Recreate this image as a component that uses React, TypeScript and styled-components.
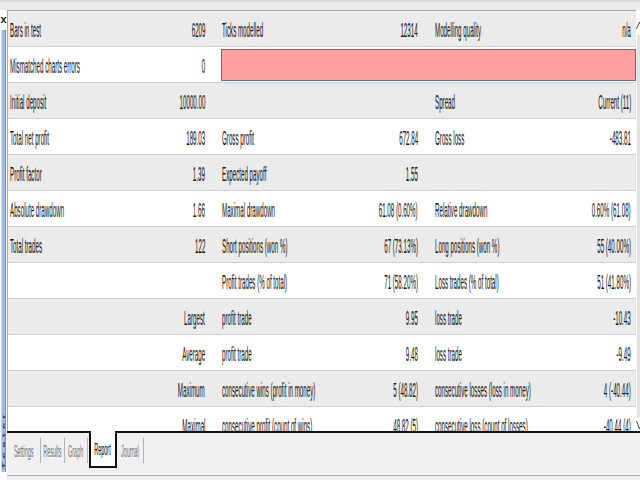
import React from 'react';
import styled, { createGlobalStyle } from 'styled-components';

const GlobalStyle = createGlobalStyle`
  html, body { margin: 0; padding: 0; width: 640px; height: 480px; overflow: hidden; background: #f0f0f0; }
  body { font-family: "Liberation Sans", Arial, sans-serif; color: #111; }
  * { box-sizing: border-box; }
`;

const Window = styled.div`
  width: 640px;
  height: 480px;
  display: flex;
  flex-direction: column;
  background: #f0f0f0;
  overflow: hidden;
`;

const TopBar = styled.div`
  height: 10px;
  flex: none;
  background: #ebebeb;
  border-top: 2px solid #dadada;
`;

const Body = styled.div`
  display: grid;
  grid-template-columns: 7px 633px;
  height: 470px;
  flex: none;
`;

const SideStrip = styled.div`
  display: grid;
  grid-template-rows: 18px 1fr;
  padding-bottom: 8px;
  background: #ffffff;
  height: 470px;
`;

const Close = styled.div`
  display: flex;
  align-items: center;
  justify-content: center;
  font-size: 11px;
  font-weight: bold;
  color: #222;
`;

const BlueBar = styled.div`
  margin: 2px 1px 0 1px;
  background-color: #9dbbe2;
  border-left: 1px solid #c8d9ef;
  border-right: 1px solid #6b92c6;
  display: flex;
  flex-direction: column;
  justify-content: flex-end;
  align-items: center;
  padding-bottom: 3px;
  overflow: hidden;
`;

const VerticalLabel = styled.span`
  writing-mode: vertical-rl;
  transform: scaleX(0.35) rotate(180deg);
  font-size: 12px;
  font-weight: bold;
  letter-spacing: 4px;
  color: #1c2c5c;
  white-space: nowrap;
`;

const Content = styled.div`
  min-width: 0;
  display: flex;
  flex-direction: column;
`;

const ReportArea = styled.div`
  height: 421px;
  flex: none;
  display: flex;
`;

const Table = styled.div`
  flex: 1;
  min-width: 0;
  overflow: hidden;
  background: #ffffff;
  border-top: 1px solid #a9a9a9;
  border-left: 1px solid #a9a9a9;
`;

const Row = styled.div<{ $alt: boolean }>`
  display: grid;
  grid-template-columns: 106px 106px 106px 106px 102px 102px;
  height: 36px;
  background: ${p => (p.$alt ? '#ebebeb' : '#ffffff')};
  border-bottom: 1px solid #cfcfcf;
`;

const Cell = styled.div<{ $right?: boolean; $pl?: number; $pr?: number }>`
  display: flex;
  align-items: center;
  justify-content: ${p => (p.$right ? 'flex-end' : 'flex-start')};
  padding-left: ${p => p.$pl ?? 0}px;
  padding-right: ${p => p.$pr ?? 0}px;
  padding-top: 2px;
  white-space: nowrap;
  overflow: visible;
`;

const Txt = styled.span<{ $right?: boolean }>`
  display: inline-block;
  flex: none;
  font-size: 20px;
  line-height: 22px;
  transform: scaleX(0.31);
  transform-origin: ${p => (p.$right ? 'right' : 'left')} center;
`;

const PinkBar = styled.div`
  grid-column: 3 / 7;
  margin: 2px 0 1px 1px;
  background: #ffa0a0;
  border: 1px solid #557196;
`;

const Scrollbar = styled.div`
  width: 4px;
  flex: none;
  display: flex;
  flex-direction: column;
  background: #ffffff;
`;

const ArrowBox = styled.div<{ $h: number }>`
  height: ${p => p.$h}px;
  flex: none;
  overflow: hidden;
`;

const Thumb = styled.div`
  flex: 1;
  background: #e2e2e2;
  margin-left: 1px;
`;

const TabBar = styled.div`
  height: 37px;
  flex: none;
  display: flex;
  align-items: stretch;
  border-top: 2px solid #111;
  background: #f0f0f0;
`;

const Tab = styled.div<{ $w: number; $active?: boolean }>`
  width: ${p => p.$w}px;
  flex: none;
  display: flex;
  align-items: center;
  justify-content: center;
  padding-top: 2px;
  color: ${p => (p.$active ? '#000' : '#707070')};
  background: ${p => (p.$active ? '#ffffff' : 'transparent')};
  ${p =>
    p.$active
      ? `margin-top: -2px; border: 2px solid #111; border-top: none; margin-left: 1px;`
      : ''}
`;

const TabTxt = styled.span`
  display: inline-block;
  flex: none;
  font-size: 17px;
  line-height: 19px;
  white-space: nowrap;
  transform: scaleX(0.32);
  transform-origin: center;
`;

const Sep = styled.div`
  width: 1px;
  flex: none;
  align-self: center;
  height: 25px;
  background: #b4b4b4;
`;

const Footer = styled.div`
  height: 8px;
  flex: none;
  border-bottom: 1px solid #ababab;
`;

type RowData = string[];

const rows: RowData[] = [
  ['Bars in test', '6209', 'Ticks modelled', '12314', 'Modelling quality', 'n/a'],
  ['Mismatched charts errors', '0', 'PINK', '', '', ''],
  ['Initial deposit', '10000.00', '', '', 'Spread', 'Current (11)'],
  ['Total net profit', '189.03', 'Gross profit', '672.84', 'Gross loss', '-483.81'],
  ['Profit factor', '1.39', 'Expected payoff', '1.55', '', ''],
  ['Absolute drawdown', '1.66', 'Maximal drawdown', '61.08 (0.60%)', 'Relative drawdown', '0.60% (61.08)'],
  ['Total trades', '122', 'Short positions (won %)', '67 (73.13%)', 'Long positions (won %)', '55 (40.00%)'],
  ['', '', 'Profit trades (% of total)', '71 (58.20%)', 'Loss trades (% of total)', '51 (41.80%)'],
  ['', 'Largest', 'profit trade', '9.95', 'loss trade', '-10.43'],
  ['', 'Average', 'profit trade', '9.48', 'loss trade', '-9.49'],
  ['', 'Maximum', 'consecutive wins (profit in money)', '5 (48.82)', 'consecutive losses (loss in money)', '4 (-40.44)'],
  ['', 'Maximal', 'consecutive profit (count of wins)', '48.82 (5)', 'consecutive loss (count of losses)', '-40.44 (4)'],
];

const labelPad = [2, 0, 2, 0, 3, 0];
const valuePad = [0, 15, 0, 14, 0, 5];

const tabs: { name: string; w: number; active?: boolean }[] = [
  { name: 'Settings', w: 33 },
  { name: 'Results', w: 23 },
  { name: 'Graph', w: 22 },
  { name: 'Report', w: 28, active: true },
  { name: 'Journal', w: 26 },
];

const ChevronUp = () => (
  <svg width="4" height="25" viewBox="0 0 4 25">
    <polyline points="0.5,19 3.5,12 6.5,19" fill="none" stroke="#444" strokeWidth="1" />
  </svg>
);

const ChevronDown = () => (
  <svg width="4" height="14" viewBox="0 0 4 14">
    <polyline points="0.5,4 3.5,12 6.5,4" fill="none" stroke="#444" strokeWidth="1" />
  </svg>
);

export default function App() {
  return (
    <>
      <GlobalStyle />
      <Window>
        <TopBar />
        <Body>
          <SideStrip>
            <Close>x</Close>
            <BlueBar>
              <VerticalLabel>Tester</VerticalLabel>
            </BlueBar>
          </SideStrip>
          <Content>
            <ReportArea>
              <Table>
                {rows.map((r, i) => (
                  <Row key={i} $alt={i % 2 === 0}>
                    {r[2] === 'PINK' ? (
                      <>
                        <Cell $pl={labelPad[0]}>
                          <Txt>{r[0]}</Txt>
                        </Cell>
                        <Cell $right $pr={valuePad[1]}>
                          <Txt $right>{r[1]}</Txt>
                        </Cell>
                        <PinkBar />
                      </>
                    ) : (
                      r.map((t, j) => {
                        const right = j % 2 === 1;
                        return (
                          <Cell key={j} $right={right} $pl={labelPad[j]} $pr={valuePad[j]}>
                            {t ? <Txt $right={right}>{t}</Txt> : null}
                          </Cell>
                        );
                      })
                    )}
                  </Row>
                ))}
              </Table>
              <Scrollbar>
                <ArrowBox $h={25}>
                  <ChevronUp />
                </ArrowBox>
                <Thumb />
                <ArrowBox $h={14}>
                  <ChevronDown />
                </ArrowBox>
              </Scrollbar>
            </ReportArea>
            <TabBar>
              {tabs.map(t => (
                <React.Fragment key={t.name}>
                  <Tab $w={t.w} $active={t.active}>
                    <TabTxt>{t.name}</TabTxt>
                  </Tab>
                  {!t.active ? <Sep /> : null}
                </React.Fragment>
              ))}
            </TabBar>
            <Footer />
          </Content>
        </Body>
      </Window>
    </>
  );
}
